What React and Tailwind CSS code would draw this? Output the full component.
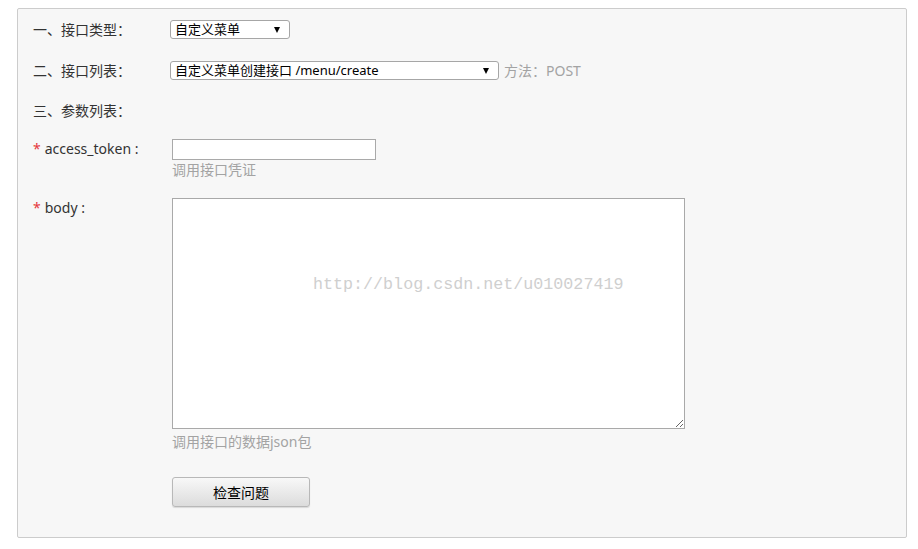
import React from 'react';

const font = "font-['Noto_Sans','Noto_Sans_CJK_SC',sans-serif]";

function FakeSelect({ value, width }) {
  return (
    <div className={`flex items-center justify-between h-[19px] ${width} bg-white border border-[#a6a6a6] rounded-[3px] pl-[4px] pr-[9px] text-[13px] leading-none text-black`}>
      <span>{value}</span>
      <span className="w-0 h-0 border-l-[3px] border-r-[3px] border-t-[6px] border-l-transparent border-r-transparent border-t-black" />
    </div>
  );
}

function Label({ children, required, width = 'w-[139px]' }) {
  return (
    <div className={`${width} shrink-0 text-[14px] leading-[20px] text-[#333]`}>
      {required && <span className="text-[#e5383b] mr-[4px]">*</span>}
      {children}
    </div>
  );
}

const App = () => {
  return (
    <div className={`w-[918px] h-[549px] bg-white pt-[8px] pl-[17px] ${font}`}>
      <div className="w-[890px] h-[530px] bg-[#f7f7f7] border border-[#cccccc] rounded-[2px] pl-[15px] pt-[11px]">
        {/* 接口类型 */}
        <div className="flex items-center h-[19px]">
          <Label width="w-[137px]">一、接口类型：</Label>
          <FakeSelect value="自定义菜单" width="w-[120px]" />
        </div>

        {/* 接口列表 */}
        <div className="flex items-center h-[19px] mt-[22px]">
          <Label width="w-[137px]">二、接口列表：</Label>
          <FakeSelect value="自定义菜单创建接口 /menu/create" width="w-[329px]" />
          <span className="ml-[5px] text-[14px] text-[#a3a3a3]">方法：POST</span>
        </div>

        {/* 参数列表 */}
        <div className="flex items-center h-[20px] mt-[21px]">
          <Label>三、参数列表：</Label>
        </div>

        {/* access_token */}
        <div className="flex items-start mt-[18px]">
          <Label required>access_token :</Label>
          <div className="flex flex-col">
            <input type="text" className="w-[204px] h-[21px] bg-white border border-[#a9a9a9] outline-none" />
            <div className="mt-[1px] text-[14px] leading-[18px] text-[#a3a3a3]">调用接口凭证</div>
          </div>
        </div>

        {/* body */}
        <div className="flex items-start mt-[19px]">
          <Label required>body :</Label>
          <div className="flex flex-col">
            <div className="relative">
              <textarea className="block w-[513px] h-[231px] bg-white border border-[#a9a9a9] outline-none" />
              <span className="absolute left-[141px] top-[77px] pointer-events-none font-['Liberation_Mono',monospace] text-[16.7px] leading-[20px] text-[#cfcfcf] whitespace-nowrap">
                http://blog.csdn.net/u010027419
              </span>
            </div>
            <div className="mt-[4px] text-[14px] leading-[18px] text-[#a3a3a3]">调用接口的数据json包</div>
            <button className="mt-[26px] w-[138px] h-[30px] rounded-[3px] border border-[#b8b8b8] bg-gradient-to-b from-[#f8f8f8] to-[#dcdcdc] shadow-[0_1px_1px_rgba(0,0,0,0.12)] text-[14px] text-black">
              检查问题
            </button>
          </div>
        </div>
      </div>
    </div>
  );
};

export default App;
